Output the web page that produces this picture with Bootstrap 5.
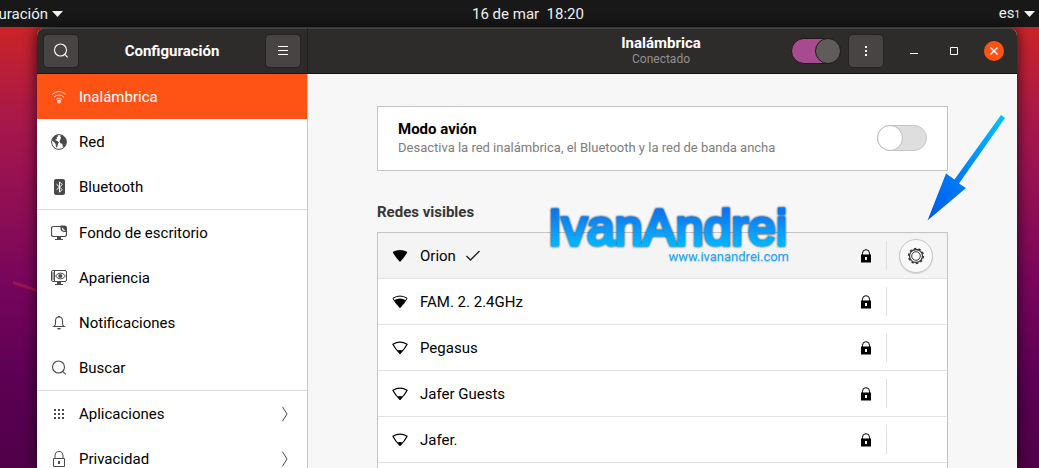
<!DOCTYPE html>
<html lang="es">
<head>
<meta charset="utf-8">
<meta name="viewport" content="width=device-width, initial-scale=1">
<title>Configuración</title>
<link href="https://cdn.jsdelivr.net/npm/bootstrap@5.3.0/dist/css/bootstrap.min.css" rel="stylesheet">
<style>
  body {
    font-family: Roboto, "Noto Sans", sans-serif;
    font-size: 15px;
    line-height: 20px;
    color: #000;
    background: linear-gradient(#c92428 0, #c92428 28px, #a8184a 120px, #78065c 280px, #5c0054 380px, #500048 100%);
  }
  button { color: inherit; }
  svg { display: block; flex: none; }

  .topbar { display: grid; grid-template-columns: 1fr auto 1fr; flex: none; height: 27px; background: #181818; color: #f2f2f2; }
  .topbar button, .titlebar button, .gear { border: 0; background: none; padding: 0; }
  .app-menu { width: 63px; overflow: hidden; }
  .clock { margin-left: 17px; white-space: pre; }
  .keyboard { margin-right: 4px; }
  .keyboard small { font-size: 10px; }

  .desktop { padding: 1px 22px 0 37px; min-height: 0; }
  .streak { position: absolute; left: 0; bottom: 174px; }
  .app-window { border-radius: 8px 8px 0 0; box-shadow: 0 0 14px rgba(0, 0, 0, .75); background: #f7f7f7; overflow: hidden; }

  .titlebar { height: 46px; background: #2e2c2b; color: #fff; border-bottom: 1px solid #141414; box-shadow: inset 0 1px #464341; }
  .pane-left { width: 271px; }
  .titlebar .pane-left { border-right: 1px solid #232120; padding: 0 7px; }
  .titlebar .tool { width: 34px; height: 32px; background: #484443; border-radius: 4px; box-shadow: 0 0 0 1px #242221; display: grid; place-items: center; }
  .title { line-height: 16px; }
  .title small { font-size: 12px; color: #92908f; }
  .wifi-title { padding-left: 223px; }
  .win-controls { padding: 0 13px 0 25px; }
  .close-btn { width: 20px; height: 20px; border-radius: 50%; display: grid; place-items: center; }
  .titlebar .close-btn { background: #ff5316; }

  .gtk-switch.form-check-input {
    float: none; margin: 0; width: 50px; height: 26px; border-radius: 13px;
    border: 1px solid #c4c4c4; background: #dedede; box-shadow: none; flex: none;
  }
  .gtk-switch::before {
    content: ""; display: block; width: 26px; height: 26px; margin: -1px; border-radius: 50%;
    background: #fff; border: 1px solid #bdbdbd;
  }
  .gtk-switch.form-check-input:checked { background: #a84a8f; border-color: #1d1b1b; }
  .gtk-switch:checked::before { margin-left: auto; background: #5f5c5a; border-color: #1d1b1b; }

  .side { background: #fff; border-right: 1px solid #c6c6c6; color: #000; }
  .side a { display: flex; align-items: center; gap: 12px; flex: none; height: 45px; padding: 0 14px; color: inherit; text-decoration: none; }
  .side a svg { color: #4a4a4a; }
  .side a.current { background: #ff5316; color: #fff; }
  .side a.current svg { color: #ffd0bf; }
  .side hr { margin: 0; flex: none; border-top: 1px solid #dedede; opacity: 1; }

  .content { padding: 32px 69px 0; }
  .panel { background: #fff; border: 1px solid #c4c4c4; }
  .airplane { padding: 12px 20px 13px; }
  .airplane label { font-weight: 700; }
  .airplane small, .site { font-size: 13px; line-height: 18px; }
  .airplane small { color: #7d7d7d; }
  .section-title { font-size: 15px; line-height: 20px; font-weight: 700; color: #363636; margin: 31px 0 10px; }
  .net { display: flex; align-items: center; height: 46px; padding: 0 14px; border-bottom: 1px solid #e2e2e2; }
  .net.connected { background: #f4f4f4; }
  .net-name { margin-left: 12px; }
  .net-action { width: 47px; height: 29px; margin-left: 15px; border-left: 1px solid #e0e0e0; display: flex; align-items: center; justify-content: flex-end; }
  .gear { width: 34px; height: 34px; flex: none; border-radius: 50%; display: grid; place-items: center; }
  .net .gear { background: #fafafa; border: 1px solid #c6c6c6; box-shadow: 0 1px 1px rgba(0, 0, 0, .12); }

  .watermark { position: absolute; right: 153px; top: -40px; text-align: right; pointer-events: none; }
  .site { color: #12aafc; text-decoration: none; display: block; margin-top: -10px; padding-right: 6px; pointer-events: auto; text-shadow: 0 1px 1px rgba(0, 0, 0, .2); }
  .pointer { position: absolute; right: 11px; top: 40px; pointer-events: none; }
</style>
</head>
<body class="vh-100 d-flex flex-column overflow-hidden">

<svg width="0" height="0" class="position-absolute" aria-hidden="true">
  <defs>
    <symbol id="lock" viewBox="0 0 10 14"><path d="M1.500 6V4.200a3.500 3.500 0 0 1 7 0V6" fill="none" stroke="#000" stroke-width="1"/><path d="M0 5.500h10V13.500H0zM4 8v3h2V8z" fill="#000" fill-rule="evenodd"/></symbol>
    <symbol id="wifi-full" viewBox="0 0 16 14"><path d="M.6 3Q8-1.200 15.400 3 12.800 8 8 13 3.200 8 .6 3z"/></symbol>
    <symbol id="wifi-good" viewBox="0 0 16 14"><path d="M.9 3.200Q8-1.100 15.100 3.200 12.800 8 8 12.600 3.200 8 .9 3.200z" fill="none" stroke="#000"/><path d="M2.400 5Q8 1.800 13.600 5 11.500 9 8 13 4.500 9 2.400 5z"/></symbol>
    <symbol id="wifi-low" viewBox="0 0 16 14"><path d="M.9 3.200Q8-1.100 15.100 3.200 12.800 8 8 12.400 3.200 8 .9 3.200z" fill="none" stroke="#000" stroke-width="1.200"/><path d="M5.200 9.800Q8 8.200 10.800 9.800L8 13z"/></symbol>
    <symbol id="search" viewBox="0 0 16 16"><g fill="none" stroke="currentColor" stroke-width="1.100"><circle cx="7.500" cy="7" r="6"/><path d="m11.700 11.300 3 3"/></g></symbol>
    <symbol id="next" viewBox="0 0 8 16"><path d="m1.500.8 4.500 7.200-4.500 7.200" fill="none" stroke="#4a4a4a"/></symbol>
  </defs>
</svg>

<header class="topbar align-items-center">
  <button class="app-menu d-flex justify-content-end align-items-center gap-1" type="button">Configuración
    <svg width="11" height="6"><path d="M0 0h11L5.500 6z" fill="#f2f2f2"/></svg></button>
  <button class="clock" type="button">16 de mar  18:20</button>
  <button class="keyboard d-flex align-items-center gap-1 ms-auto" type="button"><span>es<small>1</small></span>
    <svg width="11" height="6"><path d="M0 0h11L5.500 6z" fill="#f2f2f2"/></svg></button>
</header>

<div class="desktop flex-grow-1 d-flex position-relative">
  <svg class="streak" width="37" height="16"><path d="M13 3 37 11v3L13 6z" fill="#a01450"/></svg>
  <div class="app-window flex-grow-1 d-flex flex-column position-relative">

    <div class="titlebar d-flex flex-shrink-0">
      <div class="pane-left d-flex align-items-center justify-content-between flex-shrink-0">
        <button class="tool" type="button" aria-label="Buscar"><svg width="16" height="16"><use href="#search"/></svg></button>
        <b>Configuración</b>
        <button class="tool" type="button" aria-label="Menú"><svg width="12" height="11"><path d="M1 1.500h10M1 5.500h10M1 9.500h10" stroke="#fff"/></svg></button>
      </div>
      <div class="flex-grow-1 d-flex align-items-center">
        <div class="title wifi-title flex-grow-1 d-flex flex-column align-items-center">
          <b>Inalámbrica</b><small>Conectado</small>
        </div>
        <input class="gtk-switch form-check-input me-2" type="checkbox" role="switch" checked aria-label="Wi-Fi">
        <button class="tool" type="button" aria-label="Más opciones"><svg width="4" height="12"><path d="M1 1h2v2H1zM1 5h2v2H1zM1 9h2v2H1z" fill="#fff"/></svg></button>
        <div class="win-controls d-flex align-items-center gap-4">
          <button type="button" aria-label="Minimizar"><svg width="12" height="12"><path d="M2 8.500h8" stroke="#fff"/></svg></button>
          <button class="ms-1" type="button" aria-label="Maximizar"><svg width="12" height="12"><path d="M2.500 2.500h7v7h-7z" fill="none" stroke="#fff"/></svg></button>
          <button class="close-btn" type="button" aria-label="Cerrar"><svg width="10" height="10"><path d="m1.500 1.500 7 7m0-7-7 7" stroke="#fff" stroke-width="1.400"/></svg></button>
        </div>
      </div>
    </div>

    <div class="flex-grow-1 d-flex overflow-hidden">
      <nav class="side pane-left d-flex flex-column flex-shrink-0">
        <a class="current" href="#"><svg width="16" height="16"><g fill="none" stroke="currentColor"><path d="M1 5.500q7-6 14 0M3 8q5-4 10 0M5.200 10.200q2.800-2.200 5.600 0"/></g><circle cx="8" cy="12.500" r="2" fill="currentColor"/></svg>Inalámbrica</a>
        <a href="#"><svg width="16" height="16"><circle cx="8" cy="8" r="7.400" fill="none" stroke="currentColor"/><path d="M1.200 5Q3 1.400 6.500.8L7 2.500 5.500 3.200 6.200 4.500 4 6l2.300 1 1.500 1.500-1 2-.8 3-1-.5-.3-2.500-1.200-2L1 6.500zM9.300 5.600 10 3.500 9 2l1.500-1Q15.300 3 15.300 8q-.3 3-2 5l-1.500-.2-.5-3-2-.5-.8-2z" fill="currentColor"/></svg>Red</a>
        <a href="#"><svg width="16" height="16"><rect x="3" width="11" height="16" rx="2" fill="currentColor"/><path d="m5.500 5.200 5.700 5.300-2.700 2.700V2.800l2.700 2.700-5.700 5.300" fill="none" stroke="#fff"/></svg>Bluetooth</a>
        <hr>
        <a href="#"><svg width="16" height="16"><path d="M10 1.500H2.500q-2 0-2 2v6q0 2 2 2h11q2 0 2-2V6" fill="none" stroke="currentColor" stroke-width="1.200"/><path d="M9.500.5h4.200Q16 .8 16 3v4h-3q-3.500-.5-3.500-3.500z" fill="currentColor"/><path d="M11 2.500V4q.5 1.500 2 1.700h1.500z" fill="#fff"/><path d="M6 12h4v2h2v1H4v-1h2z" fill="currentColor"/></svg>Fondo de escritorio</a>
        <a href="#"><svg width="16" height="16"><rect x=".5" y=".5" width="15" height="11" rx="1.500" fill="none" stroke="currentColor"/><path d="M3.500 1v10M1 3h2M1 5h2M1 7h2M1 9h2M4.500 6q5-6 10 0-5 6-10 0z" fill="none" stroke="currentColor"/><circle cx="9.300" cy="6" r="2" fill="currentColor"/><path d="M6 12h4v2h2v1H4v-1h2z" fill="currentColor"/></svg>Apariencia</a>
        <a href="#"><svg width="16" height="16"><path d="M3 11.500q1.700-1 1.500-3.500V5.500Q4.700 2 8 2t3.500 3.500V8q-.2 2.500 1.500 3.500z" fill="none" stroke="currentColor" stroke-width="1.100"/><path d="M7 1h2v1H7zM6 13h4l-1 1.500H7z" fill="currentColor"/></svg>Notificaciones</a>
        <a href="#"><svg width="16" height="16"><use href="#search"/></svg>Buscar</a>
        <hr>
        <a href="#"><svg width="16" height="16"><path d="M3 3h2v2H3zM7 3h2v2H7zM11 3h2v2h-2zM3 7h2v2H3zM7 7h2v2H7zM11 7h2v2h-2zM3 11h2v2H3zM7 11h2v2H7zM11 11h2v2h-2z" fill="currentColor"/></svg>Aplicaciones<svg class="ms-auto me-1" width="8" height="16"><use href="#next"/></svg></a>
        <a href="#"><svg width="16" height="16"><path d="M2.500 7.500h11v8h-11zM4 7V5q0-4.500 4-4.500T12 5v2" fill="none" stroke="currentColor"/><path d="M7 10h2v3H7z" fill="currentColor"/></svg>Privacidad<svg class="ms-auto me-1" width="8" height="16"><use href="#next"/></svg></a>
      </nav>

      <main class="content flex-grow-1">
        <section class="panel airplane d-flex align-items-center justify-content-between">
          <div class="d-flex flex-column"><label for="airplane">Modo avión</label><small>Desactiva la red inalámbrica, el Bluetooth y la red de banda ancha</small></div>
          <input class="gtk-switch form-check-input" type="checkbox" role="switch" id="airplane">
        </section>

        <h2 class="section-title">Redes visibles</h2>

        <div class="position-relative">
          <ul class="panel list-unstyled mb-0">
            <li class="net connected"><svg width="16" height="14"><use href="#wifi-full"/></svg><span class="net-name">Orion</span>
              <svg class="ms-2" width="18" height="14"><path d="m2.500 7 4 4L15.500 2" fill="none" stroke="#222" stroke-width="1.400"/></svg>
              <svg class="ms-auto" width="10" height="14"><use href="#lock"/></svg>
              <span class="net-action"><button class="gear" type="button" aria-label="Opciones de Orion"><svg width="18" height="18" fill="none" stroke="#3a3a3a"><circle cx="9" cy="9" r="6.500" stroke-width="1.300"/><circle cx="9" cy="9" r="4.300"/><circle cx="9" cy="9" r="7.400" stroke-width="1.500" stroke-dasharray="2.300 2.350"/></svg></button></span></li>
            <li class="net"><svg width="16" height="14"><use href="#wifi-good"/></svg><span class="net-name">FAM. 2. 2.4GHz</span><svg class="ms-auto" width="10" height="14"><use href="#lock"/></svg><span class="net-action"></span></li>
            <li class="net"><svg width="16" height="14"><use href="#wifi-low"/></svg><span class="net-name">Pegasus</span><svg class="ms-auto" width="10" height="14"><use href="#lock"/></svg><span class="net-action"></span></li>
            <li class="net"><svg width="16" height="14"><use href="#wifi-low"/></svg><span class="net-name">Jafer Guests</span><svg class="ms-auto" width="10" height="14"><use href="#lock"/></svg><span class="net-action"></span></li>
            <li class="net"><svg width="16" height="14"><use href="#wifi-low"/></svg><span class="net-name">Jafer.</span><svg class="ms-auto" width="10" height="14"><use href="#lock"/></svg><span class="net-action"></span></li>
            <li class="net"></li>
          </ul>
          <div class="watermark">
            <svg width="250" height="66" overflow="visible">
              <defs>
                <linearGradient id="brand" x1="0" y1="0" x2="0" y2="1"><stop offset=".2" stop-color="#0a74ee"/><stop offset=".8" stop-color="#06b4ff"/></linearGradient>
                <filter id="glow" x="-5%" y="-20%" width="110%" height="140%"><feDropShadow dx="0" dy="0" stdDeviation="1.300" flood-color="#000" flood-opacity="1"/></filter>
              </defs>
              <text x="3" y="53" font-family="Liberation Sans, sans-serif" font-size="50" fill="url(#brand)" stroke="url(#brand)" stroke-width="3" filter="url(#glow)">IvanAndrei</text>
            </svg>
            <a class="site" href="#">www.ivanandrei.com</a>
          </div>
        </div>
      </main>
    </div>

    <svg class="pointer" width="80" height="156" viewBox="926 68 80 156">
      <defs><linearGradient id="shaft" x1="1" y1="0" x2="0" y2="1"><stop offset="0" stop-color="#00c4ff"/><stop offset=".6" stop-color="#007cf5"/><stop offset="1" stop-color="#0058e8"/></linearGradient></defs>
      <path d="m1001 115 4 3-46 65.500 7 4.500-38.500 32.500 18.500-47 8.500 6z" fill="url(#shaft)"/>
    </svg>
  </div>
</div>

<script src="https://cdn.jsdelivr.net/npm/bootstrap@5.3.0/dist/js/bootstrap.bundle.min.js"></script>
</body>
</html>
